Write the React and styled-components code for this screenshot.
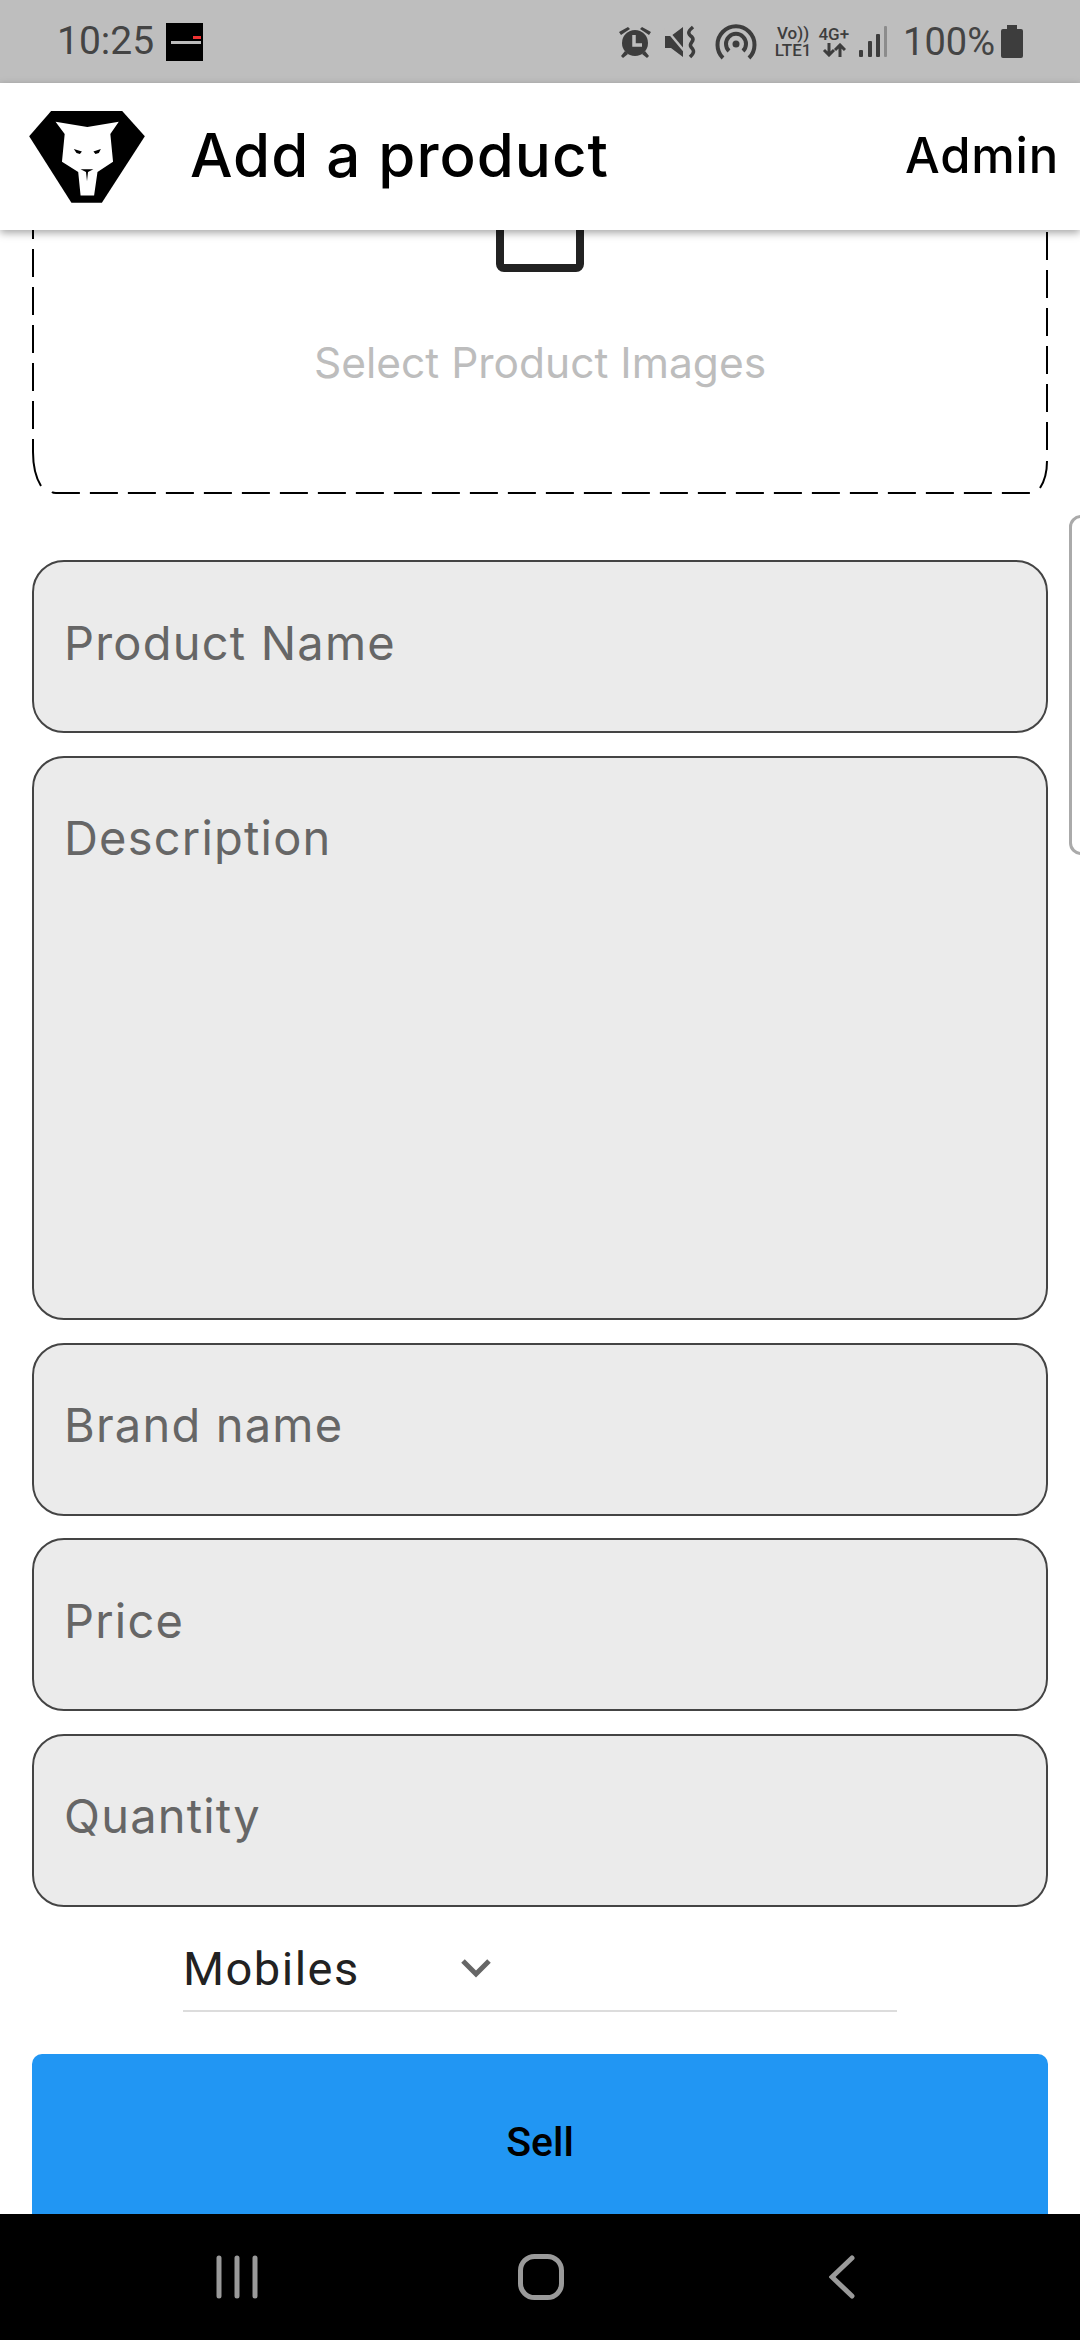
import React from "react";
import styled, { createGlobalStyle } from "styled-components";

const GlobalStyle = createGlobalStyle`
    html, body {
        margin: 0;
        padding: 0;
        background: #fff;
    }
    * {
        box-sizing: border-box;
    }
`;

const Screen = styled.div`
    position: relative;
    display: flex;
    flex-direction: column;
    width: 1080px;
    height: 2340px;
    overflow: hidden;
    background: #fff;
    font-family: "Inter", "Liberation Sans", sans-serif;
`;

const StatusBar = styled.div`
    display: flex;
    align-items: center;
    flex: 0 0 83px;
    padding: 0 57px 0 57px;
    background: #bebebe;
    color: #444;
    font-family: Roboto, sans-serif;
`;

const Clock = styled.div`
    font-size: 39px;
    line-height: 83px;
`;

const Thumb = styled.div`
    display: flex;
    flex-direction: column;
    align-items: flex-end;
    justify-content: center;
    gap: 2px;
    width: 37px;
    height: 38px;
    margin-left: 12px;
    padding: 0 2px 4px;
    background: #000;
`;

const ThumbBit = styled.div`
    width: ${(props) => props.width};
    height: ${(props) => props.height};
    background: ${(props) => props.color};
`;

const StatusRight = styled.div`
    display: flex;
    align-items: center;
    margin-left: auto;
`;

const StackText = styled.div`
    display: flex;
    flex-direction: column;
    align-items: center;
    margin-left: ${(props) => props.left};
    font-size: 17px;
    font-weight: 500;
    line-height: 17px;
    color: #3d3d3d;
`;

const Percent = styled.div`
    margin-left: 16px;
    font-size: 38px;
    color: #444;
`;

const Header = styled.div`
    position: relative;
    z-index: 2;
    display: flex;
    align-items: center;
    flex: 0 0 147px;
    padding: 0 21px 0 29px;
    background: #fff;
    box-shadow: 0 3px 8px rgba(0, 0, 0, 0.35);
`;

const Title = styled.div`
    margin-left: 45px;
    padding-bottom: 3px;
    font-size: 60px;
    font-weight: 500;
    letter-spacing: 1px;
    color: #000;
`;

const Admin = styled.div`
    margin-left: auto;
    padding-bottom: 3px;
    font-size: 49px;
    font-weight: 500;
    letter-spacing: 0.8px;
    color: #000;
`;

const Body = styled.div`
    flex: 1;
    min-height: 0;
    overflow: hidden;
    padding: 0 32px;
`;

const Dropzone = styled.div`
    position: relative;
    display: flex;
    flex-direction: column;
    align-items: center;
    justify-content: flex-end;
    gap: 63px;
    height: 400px;
    margin-top: -136px;
    padding-bottom: 103px;
`;

const DashFrame = styled.svg`
    position: absolute;
    top: 0;
    left: 0;
`;

const ImageBox = styled.div`
    width: 88px;
    height: 100px;
    border: 8px solid #222;
    border-radius: 8px;
`;

const DropText = styled.div`
    font-size: 42.5px;
    line-height: 56px;
    color: #bdbdbd;
`;

const Form = styled.div`
    display: flex;
    flex-direction: column;
    gap: 22.5px;
    margin-top: 66px;
`;

const Field = styled.div`
    display: flex;
    align-items: ${(props) => (props.multiline ? "flex-start" : "center")};
    height: ${(props) => props.height || "173px"};
    padding: ${(props) => (props.multiline ? "52px 30px 0" : "0 30px 8px")};
    border: 2px solid #444;
    border-radius: 32px;
    background: #ebebeb;
    font-size: 47px;
    line-height: 56px;
    letter-spacing: 1.2px;
    color: #666;
`;

const SelectRow = styled.div`
    display: flex;
    align-items: center;
    height: 72px;
    margin: 33.5px 151px 0;
    border-bottom: 2px solid #dcdcdc;
    padding-bottom: 14px;
    font-family: Roboto, sans-serif;
    font-size: 47px;
    letter-spacing: 1.5px;
    color: #222;
`;

const Chevron = styled.svg`
    margin-left: 100px;
`;

const SellButton = styled.div`
    display: flex;
    align-items: center;
    justify-content: center;
    height: 176px;
    margin-top: 42px;
    border-radius: 10px;
    background: #2196f3;
    font-family: Roboto, sans-serif;
    font-size: 41px;
    font-weight: 500;
    color: #000;
`;

const SideHandle = styled.div`
    position: absolute;
    top: 515px;
    left: 1069px;
    width: 30px;
    height: 340px;
    border: 3px solid #aaa;
    border-radius: 12px;
    background: #fff;
`;

const NavBar = styled.div`
    position: relative;
    z-index: 2;
    display: flex;
    align-items: center;
    justify-content: space-between;
    flex: 0 0 126px;
    padding: 0 225px 0 216px;
    background: #000;
`;

const HomeIcon = styled.svg`
    margin-left: -6px;
`;

const AlarmIcon = () => (
    <svg width="34" height="34" viewBox="0 0 34 34" fill="#3d3d3d">
        <circle cx="17" cy="18" r="13" />
        <path d="M12 4 L3 10 L1 7 L10 2Z M22 4 L31 10 L33 7 L24 2Z M7 26 L3 31 L5 33 L10 29Z M27 26 L31 31 L29 33 L24 29Z" />
        <path d="M16 10 V20 H24" fill="none" stroke="#bebebe" strokeWidth="3.5" />
    </svg>
);

const MuteIcon = () => (
    <svg width="34" height="34" viewBox="0 0 34 34" style={{ marginLeft: 12 }}>
        <path d="M1 11 H7 L19 2 V32 L7 23 H1Z" fill="#3d3d3d" />
        <path d="M1 3 L22 28" stroke="#bebebe" strokeWidth="2.5" />
        <path d="M29 2 C23 7 24 9 28 12 C32 16 24 18 27 22 C31 26 30 28 26 32" fill="none" stroke="#3d3d3d" strokeWidth="3.5" />
    </svg>
);

const HotspotIcon = () => (
    <svg width="42" height="36" viewBox="0 0 42 36" style={{ marginLeft: 17 }} fill="none" stroke="#3d3d3d" strokeWidth="4">
        <path d="M8 34 A18.5 18.5 0 1 1 34 34" />
        <path d="M14 27 A10 10 0 1 1 28 27" />
        <circle cx="21" cy="20" r="3.5" fill="#3d3d3d" stroke="none" />
    </svg>
);

const ArrowsIcon = () => (
    <svg width="24" height="14" viewBox="0 0 24 14" fill="none" stroke="#3d3d3d" strokeWidth="3">
        <path d="M7 0 V12 M2 7 L7 12 L12 7" />
        <path d="M18 14 V2 M13 7 L18 2 L23 7" />
    </svg>
);

const SignalIcon = () => (
    <svg width="28" height="32" viewBox="0 0 28 32" style={{ marginLeft: 10 }}>
        <rect x="0" y="24" width="4" height="7" rx="1" fill="#3d3d3d" />
        <rect x="9" y="15" width="4" height="16" rx="1" fill="#3d3d3d" />
        <rect x="17" y="8" width="4" height="23" rx="1" fill="#3d3d3d" />
        <rect x="25" y="0" width="3" height="31" rx="1" fill="#8c8c8c" />
    </svg>
);

const BatteryIcon = () => (
    <svg width="22" height="33" viewBox="0 0 22 33" style={{ marginLeft: 6 }}>
        <path d="M6 0 H16 V4 H20 Q22 4 22 6 V31 Q22 33 20 33 H2 Q0 33 0 31 V6 Q0 4 2 4 H6Z" fill="#3d3d3d" />
    </svg>
);

const WolfLogo = () => (
    <svg width="116" height="92" viewBox="60 60 342 272">
        <path d="M125 60 H335 L402 135 L275 331 H185 L60 135Z" fill="#000" />
        <path
            d="M138 92 L232 107 L325 92 L300 128 L308 210 L262 240 L252 310 H212 L205 240 L157 210 L165 128Z"
            fill="#fff"
        />
        <path d="M192 172 L216 180 L210 187 L200 184Z M272 172 L250 180 L256 187 L266 184Z" fill="#000" />
        <path d="M212 232 H250 L234 240 L231 268 L228 240Z" fill="#000" />
    </svg>
);

const DropBorder = () => (
    <DashFrame width="1016" height="400" viewBox="0 0 1016 400" fill="none" stroke="#000" strokeWidth="2">
        <path d="M1 335 V0" strokeDasharray="28 10" />
        <path d="M1 345 V358 C1 375 4 384 9 392" />
        <path d="M20 398 Q21 399 24 399 H998" strokeDasharray="28 10" />
        <path d="M1015 356 V0" strokeDasharray="28 10" />
        <path d="M1015 367 C1015 380 1012 388 1008 394" />
    </DashFrame>
);

const NavIcons = () => (
    <>
        <svg width="42" height="44" viewBox="0 0 42 44" stroke="#9a9a9a" strokeWidth="5" strokeLinecap="round">
            <path d="M3 3 V41 M21 3 V41 M39 3 V41" />
        </svg>
        <HomeIcon width="46" height="46" viewBox="0 0 46 46" fill="none" stroke="#9a9a9a" strokeWidth="5">
            <rect x="2.5" y="2.5" width="41" height="41" rx="14" />
        </HomeIcon>
        <svg width="26" height="44" viewBox="0 0 26 44" fill="none" stroke="#9a9a9a" strokeWidth="5" strokeLinecap="round">
            <path d="M23 3 L3 22 L23 41" />
        </svg>
    </>
);

const App = () => {
    return (
        <Screen>
            <GlobalStyle />
            <StatusBar>
                <Clock>10:25</Clock>
                <Thumb>
                    <ThumbBit width="8px" height="3px" color="#e33" />
                    <ThumbBit width="30px" height="3px" color="#bbb" />
                </Thumb>
                <StatusRight>
                    <AlarmIcon />
                    <MuteIcon />
                    <HotspotIcon />
                    <StackText left="18px">
                        <span>Vo))</span>
                        <span>LTE1</span>
                    </StackText>
                    <StackText left="7px">
                        <span>4G+</span>
                        <ArrowsIcon />
                    </StackText>
                    <SignalIcon />
                    <Percent>100%</Percent>
                    <BatteryIcon />
                </StatusRight>
            </StatusBar>
            <Header>
                <WolfLogo />
                <Title>Add a product</Title>
                <Admin>Admin</Admin>
            </Header>
            <Body>
                <Dropzone>
                    <DropBorder />
                    <ImageBox />
                    <DropText>Select Product Images</DropText>
                </Dropzone>
                <Form>
                    <Field>Product Name</Field>
                    <Field multiline height="564.5px">
                        Description
                    </Field>
                    <Field>Brand name</Field>
                    <Field>Price</Field>
                    <Field>Quantity</Field>
                </Form>
                <SelectRow>
                    Mobiles
                    <Chevron width="32" height="20" viewBox="0 0 32 20" fill="none" stroke="#666" strokeWidth="5">
                        <path d="M3 3 L16 16 L29 3" />
                    </Chevron>
                </SelectRow>
                <SellButton>Sell</SellButton>
            </Body>
            <SideHandle />
            <NavBar>
                <NavIcons />
            </NavBar>
        </Screen>
    );
};

export default App;
